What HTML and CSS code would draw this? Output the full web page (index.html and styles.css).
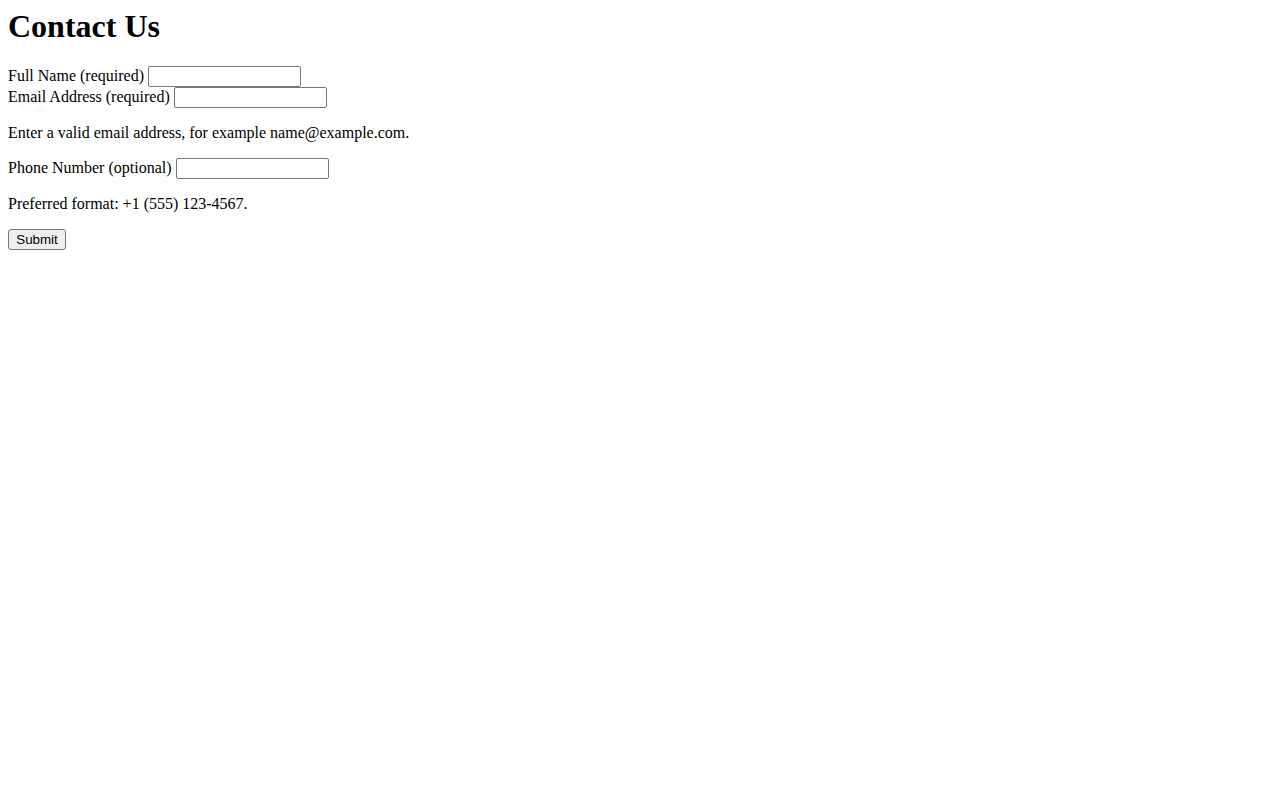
FILE: index.html
```html
<!DOCTYPE html>
<html lang="en">
<head>
<meta charset="utf-8">
<title>Contact Us</title>
<link rel="stylesheet" href="styles.css">
</head>
<body class="page">
<h1 class="title">Contact Us</h1>
<form class="contact-form">
  <div class="field"><label class="label" for="name">Full Name (required)</label> <input class="text-input" type="text" id="name"></div>
  <div class="field"><label class="label" for="email">Email Address (required)</label> <input class="text-input" type="email" id="email"></div>
  <p class="hint">Enter a valid email address, for example name@example.com.</p>
  <p class="field-p"><label class="label" for="phone">Phone Number (optional)</label> <input class="text-input" type="tel" id="phone"></p>
  <p class="hint">Preferred format: +1 (555) 123-4567.</p>
  <button class="submit" type="submit">Submit</button>
</form>
</body>
</html>
```
FILE: styles.css
```css
.page {
  margin: 8px;
  font-family: "Liberation Serif", "Times New Roman", serif;
  font-size: 16px;
  color: #000;
  background: #fff;
}
.title {
  margin: 0 0 21.44px;
  font-size: 32px;
  font-weight: bold;
}
.hint, .field-p {
  margin: 16px 0;
}
.text-input {
  box-sizing: border-box;
  width: 153px;
  height: 21px;
  padding: 1px 2px;
  border: 1px solid #767676;
  border-radius: 2px;
  background: #fff;
  font-family: "Liberation Sans", Arial, sans-serif;
  font-size: 13.333px;
}
.submit {
  box-sizing: border-box;
  width: 58px;
  height: 21px;
  padding: 1px 6px;
  border: 1px solid #767676;
  border-radius: 3px;
  background: #efefef;
  color: #000;
  font-family: "Liberation Sans", Arial, sans-serif;
  font-size: 13.333px;
}
```
